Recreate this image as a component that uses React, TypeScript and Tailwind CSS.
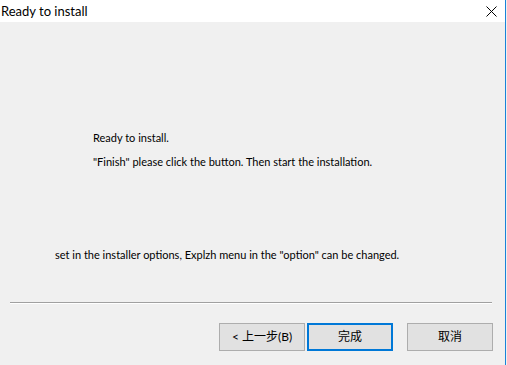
import React from "react";

const font = { fontFamily: 'Lato, "Noto Sans CJK SC", sans-serif' };

function Btn({ children, primary }: { children: React.ReactNode; primary?: boolean }) {
  return (
    <div
      className={
        "w-[86px] h-[28px] flex items-center justify-center bg-[#e1e1e1] text-[12px] text-black " +
        (primary ? "border-2 border-[#0078d7]" : "border border-[#adadad]")
      }
    >
      {children}
    </div>
  );
}

export default function App() {
  return (
    <div className="w-[507px] h-[365px] flex bg-[#f0f0f0] overflow-hidden" style={font}>
      <div className="w-[505px] flex flex-col">
        <div className="h-[22px] bg-white flex items-center justify-between pl-[1px] pr-[8px]">
          <span className="text-[13px] text-black leading-none">Ready to install</span>
          <svg width="11" height="11" viewBox="0 0 11 11" className="mt-[1px]">
            <path d="M0.5 0.5 L10.5 10.5 M10.5 0.5 L0.5 10.5" stroke="#000" strokeWidth="1" />
          </svg>
        </div>
        <div className="flex flex-col text-[11px] leading-[16px] text-black">
          <div className="pl-[93px] pt-[108px] flex flex-col gap-[8px]">
            <p>Ready to install.</p>
            <p>"Finish" please click the button. Then start the installation.</p>
          </div>
          <p className="pl-[55px] mt-[77px]">
            set in the installer options, Explzh menu in the "option" can be changed.
          </p>
          <div className="mt-[39px] ml-[10px] w-[482px] flex flex-col">
            <div className="h-px bg-[#a0a0a0]" />
            <div className="h-px bg-white" />
          </div>
          <div className="mt-[19px] flex pl-[219px]">
            <Btn>&lt;&nbsp;上一步(B)</Btn>
            <div className="ml-[2px]">
              <Btn primary>完成</Btn>
            </div>
            <div className="ml-[14px]">
              <Btn>取消</Btn>
            </div>
          </div>
        </div>
      </div>
      <div className="w-px bg-[#1a83d9]" />
      <div className="w-px bg-[#f0f0f0]" />
    </div>
  );
}
